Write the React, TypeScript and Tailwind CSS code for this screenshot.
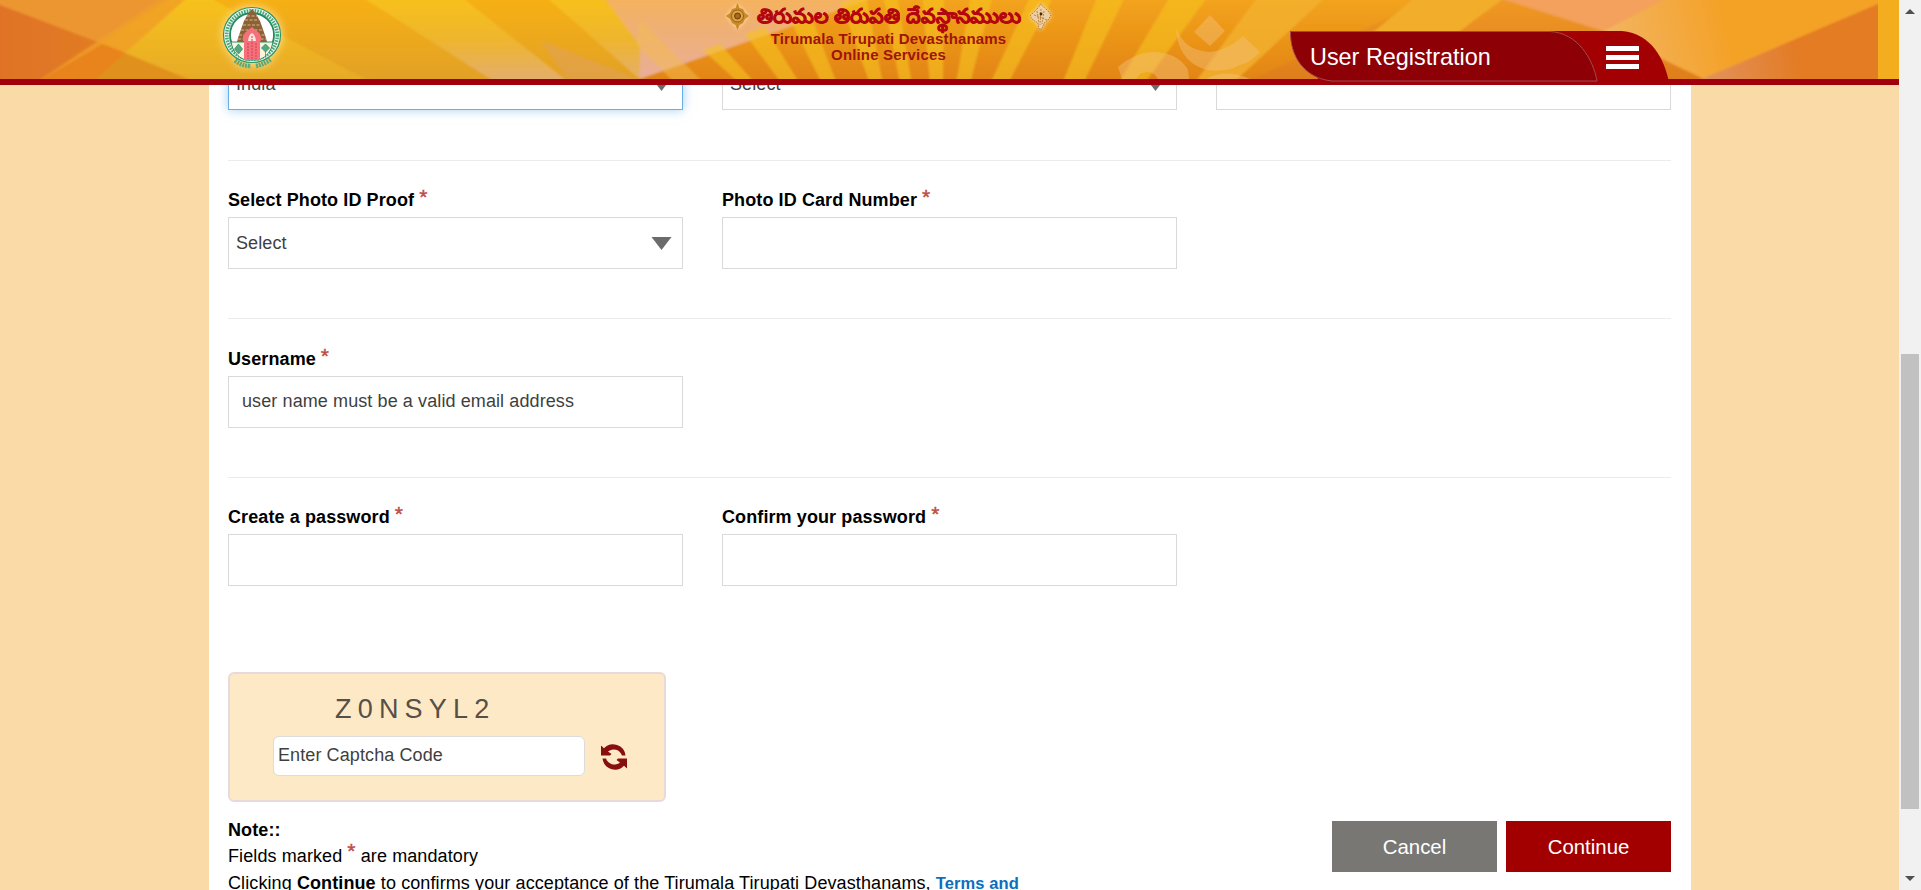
import React from "react";

function Star() {
  return <sup className="relative -top-[4px] ml-[5px] text-[21px] leading-none font-normal align-baseline text-[#bd4b48] [-webkit-text-stroke:0.4px_#bd4b48]">*</sup>;
}

function Caret() {
  return (
    <svg className="h-[13px] w-[21px]" viewBox="0 0 21 13">
      <path d="M0.5 0H20.5L10.5 13Z" fill="#6b6b6b" />
    </svg>
  );
}

function Field({ label, value, select, focus, inset }: { label?: string; value?: string; select?: boolean; focus?: boolean; inset?: boolean }) {
  return (
    <div className="w-[455px]">
      <div className="flex h-[32px] items-center pb-[2px] text-[18px] font-bold tracking-[0.1px] whitespace-nowrap text-black">
        {label}
        {label && <Star />}
      </div>
      <div
        className={
          "flex h-[52px] items-center justify-between border bg-white pr-[10px] text-[18px] tracking-[0.1px] text-[#3f3f3f] " +
          (inset ? "pl-[13px] " : "pl-[7px] ") +
          (focus ? "border-[#66afe9] shadow-[0_0_10px_rgba(102,175,233,0.6)]" : "border-[#d9d9d9]")
        }
      >
        <span className={inset ? "pb-[2px]" : ""}>{value}</span>
        {select && <Caret />}
      </div>
    </div>
  );
}

function Row({ children }: { children: React.ReactNode }) {
  return <div className="flex gap-[39px]">{children}</div>;
}

function BannerArt() {
  return (
    <svg className="absolute inset-0 h-[79px] w-[1899px] overflow-hidden" viewBox="0 0 1899 79" preserveAspectRatio="none">
      <defs>
        <filter id="soft" x="-1%" y="-5%" width="102%" height="110%">
          <feGaussianBlur stdDeviation="0.9" />
        </filter>
        <linearGradient id="base" x1="0" y1="0" x2="0" y2="1">
          <stop offset="0" stopColor="#f6b014" />
          <stop offset="1" stopColor="#e2a126" />
        </linearGradient>
        <linearGradient id="dark" x1="0" y1="0" x2="1" y2="0">
          <stop offset="0" stopColor="#e07229" />
          <stop offset="1" stopColor="#e2861c" />
        </linearGradient>
        <linearGradient id="warm" x1="0" y1="0" x2="0" y2="1">
          <stop offset="0" stopColor="#f4a51b" />
          <stop offset="1" stopColor="#e18317" />
        </linearGradient>
        <linearGradient id="yel" x1="0" y1="0" x2="0" y2="1">
          <stop offset="0" stopColor="#f8c31d" />
          <stop offset="1" stopColor="#e6a928" />
        </linearGradient>
        <linearGradient id="pale" x1="0" y1="0" x2="0" y2="1">
          <stop offset="0" stopColor="#f8c21a" />
          <stop offset="0.5" stopColor="#eeb52e" />
          <stop offset="1" stopColor="#e3ad72" />
        </linearGradient>
        <linearGradient id="pink" x1="0" y1="0" x2="0" y2="1">
          <stop offset="0" stopColor="#f5b25c" />
          <stop offset="1" stopColor="#e8ae98" />
        </linearGradient>
        <linearGradient id="right" x1="0" y1="0" x2="0" y2="1">
          <stop offset="0" stopColor="#f09a22" />
          <stop offset="1" stopColor="#de7c1e" />
        </linearGradient>
        <linearGradient id="fadeRight" gradientUnits="userSpaceOnUse" x1="1600" y1="40" x2="1720" y2="10">
          <stop offset="0" stopColor="#f3b565" />
          <stop offset="1" stopColor="#f4a228" />
        </linearGradient>
        <linearGradient id="corner" gradientUnits="userSpaceOnUse" x1="1704" y1="79" x2="1800" y2="60">
          <stop offset="0" stopColor="#e3925e" />
          <stop offset="1" stopColor="#e37b23" />
        </linearGradient>
      </defs>
      <rect width="1899" height="79" fill="url(#base)" />
      <g filter="url(#soft)">
        <path d="M-5 -5H176L34 84H-5Z" fill="#ec9632" />
        <path d="M-5 3L195 79V84H-5Z" fill="url(#dark)" />
        <path d="M166 -5H192L92 84H34Z" fill="#f0a028" fillOpacity=".75" />
        <path d="M103 44L125 53L92 84H34Z" fill="#e9831d" />
        <path d="M125 53L195 79V84H90Z" fill="#e0901a" />
        <path d="M190 -5H204L375 84H200L125 53Z" fill="url(#yel)" />
        <path d="M359 -5H459L571 84H498Z" fill="url(#pale)" />
        <path d="M544 -5H600L645 42V84Z" fill="url(#pale)" />
        <path d="M602 -5H890L640 79V45Z" fill="url(#pink)" />
        <path d="M570 84L540 40L620 72L645 84Z" fill="#e0a07a" fillOpacity=".35" />
        <path d="M882 -5H1500L1400 84H625Z" fill="url(#warm)" />
        <path d="M640 20L705 84H676L636 44Z" fill="#f4bb50" fillOpacity=".5" />
        <g fill="#f7c31c" fillOpacity=".6">
          <path d="M703 50L720 44L756 84H740Z" />
          <path d="M745 34L765 27L800 84H782Z" />
          <path d="M790 19L810 13L837 84H822Z" />
          <path d="M841 3L866 -5L883 84H870Z" />
          <path d="M883 -5H897L912 84H900Z" />
          <path d="M922 -5H944L943 84H930Z" />
          <path d="M971 -5H993L970 84H956Z" />
          <path d="M1031 -5H1054L1008 84H990Z" />
          <path d="M1098 -5H1126L1083 84H1062Z" />
          <path d="M1171 -5H1209L1144 84H1118Z" />
        </g>
        <path d="M1440 -5H1885V84H1240Z" fill="url(#right)" />
        <path d="M1259 -5H1328L1232 84H1194Z" fill="#f3b230" fillOpacity=".8" />
        <path d="M1418 -5H1508L1455 35L1370 35Z" fill="#f2ad2c" />
        <path d="M1486 -6L1680 -6L1606 32Z" fill="#f3a15c" />
        <path d="M1672 -5H1885V3L1704 79L1604 31Z" fill="url(#fadeRight)" />
        <path d="M1885 1V84H1690Z" fill="url(#corner)" />
      </g>
      <g fill="#f3c27a" fillOpacity=".45">
        <path d="M1210 15L1225 31L1210 46L1194 32Z" />
        <path d="M1176 28C1182 44 1193 51 1210 52C1224 51 1235 43 1243 36L1260 52C1252 61 1246 63 1240 65C1230 71 1214 72 1204 69C1186 63 1177 48 1176 28Z" />
        <path d="M1118 67Q1134 53 1152 52Q1178 52 1188 70L1189 79H1158Q1152 68 1140 74L1136 79H1122Z" />
        <path d="M1206 79Q1226 68 1250 79Z" />
      </g>
      <rect x="1878" width="21" height="79" fill="#f3ad1e" />
    </svg>
  );
}

function Emblem() {
  return (
    <svg className="h-[70px] w-[66px] drop-shadow-[0_0_5px_#ffe9a0]" viewBox="0 0 66 70">
      <ellipse cx="33" cy="31" rx="28.5" ry="27.5" fill="#eef6ee" stroke="#2b9568" strokeWidth="1.2" />
      <ellipse cx="33" cy="31" rx="25.300" ry="24.300" fill="none" stroke="#4ba67e" strokeWidth="3.6" strokeDasharray="1.6 1.1" />
      <ellipse cx="33" cy="31" rx="22" ry="22" fill="#fff" stroke="#1f8a5b" strokeWidth="1.8" />
      <path d="M33 5L37 10L41 17L47 34L48 38H18L19 34L25 17L29 10Z" fill="#8d6137" />
      <path d="M28 12h10M26 16h14M24 21h18M22 26h22M20 31h26M19 35h28" stroke="#d9b78a" strokeWidth="1.2" strokeDasharray="3 1.5" />
      <path d="M12 38H54Q52 51 40 56H26Q14 51 12 38Z" fill="#fff3de" stroke="#2b9568" />
      <path d="M25 56V37H24V33H25L33 25L41 33H42V37H41V56Z" fill="#f4717c" />
      <path d="M25 34L27 30L33 25L39 30L41 34" fill="none" stroke="#f4717c" strokeWidth="3" />
      <path d="M29 37Q30 30 33 29Q36 30 37 37Z" fill="#ffe3dd" />
      <path d="M33 32v23M29 39v16M37 39v16" stroke="#d63e52" strokeDasharray="2 1" />
      <path d="M19.500 40l4 5l-4 5l-4-5ZM46.500 40l4 4l-4 4l-4-4ZM46.500 47v6" fill="#2b9568" fillOpacity=".8" stroke="#2b9568" strokeWidth=".8" />
      <path d="M16 56.500Q23 62 32 62M37 62Q46 60 52 55" fill="none" stroke="#5aa97f" strokeWidth="4.500" strokeDasharray="2 .8" />
    </svg>
  );
}

function Medallion({ pale }: { pale?: boolean }) {
  return (
    <svg className="h-[27px] w-[23px] drop-shadow-[0_0_2px_#ffe3a8]" viewBox="0 0 23 27">
      {pale ? (
        <>
          <path d="M11.5 1L16 5L20 9L22 12L19 17L15 20L13 26H10L9 20L4 17L1 13L5 9L9 5Z" fill="#ecd0a4" stroke="#a8672a" strokeWidth=".8" strokeDasharray="1.500 1" />
          <path d="M8 8l2 12M12 6l-1 16M15 8l-2 13M5 12l13 5" stroke="#b77c3c" strokeWidth=".9" strokeDasharray="2 1" />
          <circle cx="12" cy="11" r="1.400" fill="#4a2408" />
        </>
      ) : (
        <>
          <path d="M11.5 0L13.500 5L17 6L19 10L23 13L19 16L17 20L13.500 22L11.500 27L9.500 22L6 20L4 16L0 13L4 10L6 6L9.500 5Z" fill="#c98a2b" />
          <circle cx="11.5" cy="13" r="6" fill="#e0a440" stroke="#9a5f17" />
          <circle cx="11.5" cy="13" r="3" fill="#a9691c" stroke="#6f3a0c" />
        </>
      )}
    </svg>
  );
}

function Header() {
  return (
    <header className="relative h-[85px] w-[1899px] shrink-0 border-b-[6px] border-[#a0000c]">
      <BannerArt />
      <div className="relative flex h-[79px] items-start">
        <div className="ml-[219px] w-[66px] pt-[4px]">
          <Emblem />
        </div>
        <div className="ml-[441px] w-[326px] text-[#a01408]">
          <div className="flex h-[31px] items-center justify-between pt-[2px]">
            <Medallion />
            <span className="text-[20.6px] leading-none font-bold whitespace-nowrap text-[#b3060e] [-webkit-text-stroke:0.5px_#b3060e]">తిరుమల తిరుపతి దేవస్థానములు</span>
            <Medallion pale />
          </div>
          <div className="pr-px text-center text-[15px] leading-[16px] font-bold tracking-[0.15px]">
            Tirumala Tirupati Devasthanams
            <br />
            Online Services
          </div>
        </div>
      </div>
      <div className="absolute top-[31px] left-[1290px] h-[51px] w-[379px]">
        <svg className="absolute inset-0 h-[51px] w-[379px]" viewBox="0 0 379 51">
          <path d="M0 0H332C362 3 374 28 379 51H30Z" fill="#a30003" />
          <path d="M.5 .5H260C288 2 303 28 307 50H42C13 47 0 24 .5 .5Z" fill="#8c0006" stroke="#a5484c" strokeWidth="1" />
        </svg>
        <div className="relative flex h-[51px] items-center justify-between pr-[30px] pl-[20px]">
          <span className="pt-[2px] text-[23.4px] leading-none text-white">User Registration</span>
          <span className="flex flex-col gap-[4px] pt-px">
            <i className="block h-[5px] w-[33px] bg-white" />
            <i className="block h-[5px] w-[33px] bg-white" />
            <i className="block h-[5px] w-[33px] bg-white" />
          </span>
        </div>
      </div>
    </header>
  );
}

function Captcha() {
  return (
    <div className="h-[130px] w-[438px] rounded-[6px] border-2 border-[#e8dada] bg-[#fee9c6] pt-[20px] pl-[43px]">
      <div className="h-[42px] pl-[62px] text-[27px] leading-[30px] tracking-[6.2px] text-[#555048]">Z0NSYL2</div>
      <div className="flex items-center gap-[16px]">
        <div className="flex h-[40px] w-[312px] items-center rounded-[6px] border border-[#dcdcdc] bg-white pb-[2px] pl-[4px] text-[18px] tracking-[0.1px] text-[#3f3f3f]">Enter Captcha Code</div>
        <svg className="mt-[2px] h-[26px] w-[26px]" viewBox="0 0 26 26" fill="#870f10">
          <path d="M0 1.500L3 4.200A12.6 12.6 0 0 1 24.500 11.500H21A8.8 8.8 0 0 0 7 7.500L10.500 10L9 11.500H0Z" />
          <path d="M26 24.500L23 21.800A12.6 12.6 0 0 1 1.500 14.500H5A8.8 8.8 0 0 0 19 18.500L15.500 16L17 14.500H26Z" />
        </svg>
      </div>
    </div>
  );
}

function Scrollbar() {
  return (
    <div className="flex h-[890px] w-[22px] flex-col items-center bg-[#f1f1f1]">
      <svg className="mt-[9px] h-[5px] w-[10px]" viewBox="0 0 10 5"><path d="M0 5L5 0L10 5Z" fill="#505050" /></svg>
      <div className="mt-[340px] h-[455px] w-[18px] bg-[#c1c1c1]" />
      <svg className="mt-[67px] h-[5px] w-[10px]" viewBox="0 0 10 5"><path d="M0 0L5 5L10 0Z" fill="#505050" /></svg>
    </div>
  );
}

export default function App() {
  return (
    <div className="flex h-[890px] w-[1921px] overflow-hidden bg-[#fadba7] font-['Liberation_Sans',Arial,sans-serif]">
      <div className="flex h-[890px] w-[1899px] flex-col">
        <Header />
        <main className="ml-[209px] h-[805px] w-[1482px] overflow-hidden bg-white pr-[20px] pl-[19px]">
          <div className="-mt-[59px]">
            <Row>
              <Field value="India" select focus />
              <Field value="Select" select />
              <Field />
            </Row>
          </div>
          <div className="mt-[50px] border-t border-[#ececec] pt-[24px]">
            <Row>
              <Field label="Select Photo ID Proof" value="Select" select />
              <Field label="Photo ID Card Number" />
            </Row>
          </div>
          <div className="mt-[49px] border-t border-[#ececec] pt-[25px]">
            <Row>
              <Field label="Username" value="user name must be a valid email address" inset />
            </Row>
          </div>
          <div className="mt-[49px] border-t border-[#ececec] pt-[24px]">
            <Row>
              <Field label="Create a password" />
              <Field label="Confirm your password" />
            </Row>
          </div>
          <div className="mt-[86px]">
            <Captcha />
          </div>
          <div className="flex justify-between pt-[14px]">
            <div className="w-[830px] pt-px text-[18px] leading-[26.5px] tracking-[0.1px] whitespace-nowrap text-black">
              <div className="h-[26px] font-bold">Note::</div>
              <div className="h-[27px]">Fields marked<Star /> are mandatory</div>
              <div className="h-[26px]">
                Clicking <b>Continue</b> to confirms your acceptance of the Tirumala Tirupati Devasthanams, <b className="text-[16.5px] text-[#0d6ebd]">Terms and</b>
              </div>
            </div>
            <div className="flex gap-[9px] pt-[5px]">
              <button className="h-[51px] w-[165px] bg-[#797774] pt-[2px] text-[20.4px] text-white">Cancel</button>
              <button className="h-[51px] w-[165px] bg-[#a20000] pt-[2px] text-[20.4px] text-white">Continue</button>
            </div>
          </div>
        </main>
      </div>
      <Scrollbar />
    </div>
  );
}
